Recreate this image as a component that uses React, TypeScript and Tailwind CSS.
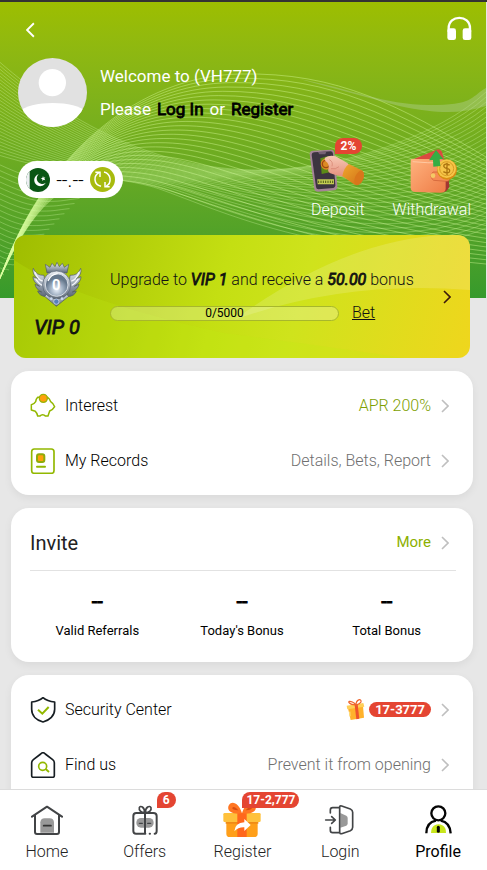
import type { ReactNode } from 'react';

/* ---------- header wave mesh ---------- */

function blend(a: number[], b: number[], count: number): string[] {
  return Array.from({ length: count }, (_, i) => {
    const t = i / (count - 1);
    const p = a.map((v, k) => (v + (b[k] - v) * t).toFixed(1));
    return `M${p[0]},${p[1]} C${p[2]},${p[3]} ${p[4]},${p[5]} ${p[6]},${p[7]} S${p[8]},${p[9]} ${p[10]},${p[11]}`;
  });
}

const crest = blend(
  [8, 256, 50, 150, 140, 74, 240, 72, 400, 104, 487, 155],
  [-10, 300, 40, 176, 80, 172, 135, 180, 290, 244, 487, 262],
  26,
);
const bowl = blend(
  [-5, 56, 90, 140, 180, 168, 260, 168, 440, 134, 487, 90],
  [-5, 152, 60, 172, 110, 174, 150, 184, 360, 282, 487, 226],
  28,
);
const fan = blend(
  [-2, 162, 20, 172, 40, 180, 60, 180, 80, 178, 100, 176],
  [-2, 270, 0, 272, 0, 272, 2, 272, 3, 273, 4, 273],
  20,
);

function Waves() {
  return (
    <svg className="absolute inset-0 h-full w-full" viewBox="0 0 487 296" preserveAspectRatio="none" fill="none" aria-hidden="true">
      <g stroke="#dcffa0" strokeOpacity=".52" strokeWidth=".8">
        {crest.map((d) => (
          <path key={d} d={d} />
        ))}
      </g>
      <g stroke="#dcffb0" strokeOpacity=".38" strokeWidth=".8">
        {bowl.map((d) => (
          <path key={d} d={d} />
        ))}
        {fan.map((d) => (
          <path key={d} d={d} />
        ))}
      </g>
      <path d="M300,77 C350,86 385,103 430,103 S470,96 487,86 L487,104 C460,112 440,112 400,104 Z" fill="#b0cf8c" fillOpacity=".45" />
    </svg>
  );
}

/* ---------- icons ---------- */

function Chevron({ className }: { className: string }) {
  return (
    <svg className={className} viewBox="0 0 8 14" fill="none" stroke="currentColor" strokeWidth="1.6" aria-hidden="true">
      <path d="M1 1l6 6-6 6" />
    </svg>
  );
}

function Headphones() {
  return (
    <svg width="25" height="24" viewBox="629 48 75 72" aria-hidden="true">
      <path d="M634 95v-10c0-42 64-42 64 0v10" fill="none" stroke="#fff" strokeWidth="7" />
      <rect x="630" y="85" width="26" height="35" rx="7" fill="#fff" />
      <rect x="676" y="85" width="26" height="35" rx="7" fill="#fff" />
    </svg>
  );
}

function Avatar() {
  return (
    <svg className="size-[69px] shrink-0 rounded-full" viewBox="0 0 207 207" role="img" aria-label="Avatar">
      <rect width="207" height="207" fill="#e1e1e1" />
      <circle cx="103" cy="74" r="41" fill="#fff" />
      <path d="M0 165C20 143 60 135 104 135s84 8 103 30v42H0z" fill="#fff" />
    </svg>
  );
}

function Flag() {
  return (
    <svg width="24" height="24" viewBox="0 0 72 72" aria-hidden="true">
      <defs>
        <clipPath id="flag-round">
          <circle cx="36" cy="36" r="36" />
        </clipPath>
      </defs>
      <g clipPath="url(#flag-round)">
        <rect width="72" height="72" fill="#0a5614" />
        <rect width="11" height="72" fill="#eef0f4" />
      </g>
      <path d="M38 19a18 18 0 1 0 21 25a15 15 0 1 1-21-25z" fill="#fff" />
      <path d="M51 24l2 5 5-1-3 4 3 5-5-2-4 4v-5l-5-3 5-1z" fill="#fff" />
    </svg>
  );
}

function Refresh() {
  return (
    <svg width="25" height="25" viewBox="0 0 75 75" aria-hidden="true">
      <circle cx="37.500" cy="37.500" r="37.500" fill="#a8bb0e" />
      <g fill="none" stroke="#fff" strokeWidth="4.500">
        <path d="M33 58C10 52 10 26 27 17" />
        <path d="M42 15c23 6 23 34 7 42" />
        <path d="M16 16h14v14" />
        <path d="M59 59H45V45" />
      </g>
    </svg>
  );
}

function DepositIcon() {
  return (
    <svg width="57" height="48" viewBox="58 48 171 144" aria-hidden="true">
      <defs>
        <linearGradient id="dep-cuff" x1="0" y1="0" x2="1" y2="1">
          <stop offset="0" stopColor="#f0a82e" />
          <stop offset="1" stopColor="#cf6f16" />
        </linearGradient>
        <linearGradient id="dep-hand" x1="0" y1="0" x2="0" y2="1">
          <stop offset="0" stopColor="#f7c9b5" />
          <stop offset="1" stopColor="#e58f7c" />
        </linearGradient>
      </defs>
      <path d="M70 59l54-3q9 0 10 9l9 101q0 11-9 12l-49 4q-10 0-11-9L60 69q0-9 10-10z" fill="#a58496" />
      <path d="M73 64l50-3q6 0 7 7l7 95q0 7-6 8l-45 4q-6 0-7-7L66 72q0-7 7-8z" fill="#3c3440" />
      <path d="M85 63l25-1-3 8H89z" fill="#766274" />
      <path d="M92 82l24-7 8 48-28 6z" fill="#5c8a16" />
      <circle cx="110" cy="99" r="17" fill="#dc8a24" />
      <circle cx="109" cy="99" r="11" fill="none" stroke="#9f4a10" strokeWidth="4" />
      <path d="M83 145h50v15H84z" fill="#c5ce52" />
      <path d="M87 149v7M94 149v7M101 149v7M108 149v7M115 149v7M122 149v7M129 149v7" stroke="#4d5a17" strokeWidth="3" />
      <path d="M106 80q14-9 32-4l35 20 8 8-18 34q-24-4-41-11-10-6-5-15 2-14-9-21-5-6-2-11z" fill="url(#dep-hand)" />
      <path d="M119 86q12 6 8 20M124 113q14 3 24-6" fill="none" stroke="#d17f6c" strokeWidth="2" />
      <path d="M178 99q-15 10-20 36 4 4 37 26 22 4 28-24 2-12-4-18z" fill="url(#dep-cuff)" />
      <ellipse cx="208" cy="141" rx="12" ry="23" fill="#d9761b" transform="rotate(22 208 141)" />
    </svg>
  );
}

function WithdrawIcon() {
  return (
    <svg width="48" height="48" viewBox="363 48 144 144" aria-hidden="true">
      <defs>
        <linearGradient id="wallet" x1="0" y1="0" x2="1" y2="1">
          <stop offset="0" stopColor="#ffb27e" />
          <stop offset="1" stopColor="#ee7c46" />
        </linearGradient>
      </defs>
      <path d="M373 85l70-29q14-3 17 10l8 32z" fill="#dc4a40" />
      <path d="M460 95l14 5 7 66q-3 14-18 18z" fill="#a43632" />
      <path d="M368 84h88q14 2 14 18v71q-1 12-15 12l-76-2q-14-1-14-13V90q0-6 3-6z" fill="url(#wallet)" />
      <path d="M371 92q45 5 93 3" stroke="#ffc9a2" strokeWidth="3" fill="none" />
      <path d="M432 123h43q7 1 7 8v14q-1 6-8 6l-40-3q-15-10-2-25z" fill="#f58b54" stroke="#c85a34" strokeWidth="2" />
      <circle cx="432" cy="134" r="7" fill="#f5c965" />
      <circle cx="474" cy="116" r="30" fill="#d98c12" />
      <circle cx="473" cy="113" r="28" fill="#f6c548" />
      <circle cx="473" cy="113" r="21" fill="none" stroke="#d99a24" strokeWidth="3" />
      <path d="M482 102q-17-6-18 3 1 6 11 8t6 10q-6 6-18-1M474 95v37" fill="none" stroke="#ad7410" strokeWidth="4" />
      <path d="M441 57l22 27-11 1 2 20-21 2-1-20-12 1z" fill="#35ad43" />
    </svg>
  );
}

function Emblem() {
  return (
    <svg width="50" height="46" viewBox="94 102 150 138" aria-hidden="true">
      <defs>
        <linearGradient id="silver" x1="0" y1="0" x2="0" y2="1">
          <stop offset="0" stopColor="#f0f2f6" />
          <stop offset=".5" stopColor="#a3adba" />
          <stop offset="1" stopColor="#5c6876" />
        </linearGradient>
        <radialGradient id="orb" cx=".5" cy=".7">
          <stop offset="0" stopColor="#eaf2fb" />
          <stop offset=".6" stopColor="#9aaabd" />
          <stop offset="1" stopColor="#66788c" />
        </radialGradient>
      </defs>
      <g fill="url(#silver)" stroke="#4b5763" strokeWidth="2">
        <path d="M98 124q8 22 32 21l8 64q-22-1-27-17l12 3q-17-8-20-23l14 6q-20-13-20-29l15 7q-19-14-14-32z" />
        <path d="M240 124q-8 22-32 21l-8 64q22-1 27-17l-12 3q17-8 20-23l-14 6q20-13 20-29l-15 7q19-14 14-32z" />
        <path d="M139 138l-5-26 14 9 6-12 9 10 6-13 7 13 9-10 6 12 13-9-5 26z" />
        <path d="M132 208l35 30 37-30-16-15h-41z" />
      </g>
      <path d="M103 136q9 24 23 26M105 155q8 15 20 20M235 136q-9 24-23 26M233 155q-8 15-20 20" stroke="#f5f7fa" strokeWidth="4" fill="none" />
      <circle cx="168" cy="174" r="42" fill="url(#silver)" stroke="#536071" strokeWidth="2" />
      <circle cx="168" cy="174" r="34" fill="url(#orb)" stroke="#d6dce4" strokeWidth="3" />
      <path d="M142 162q8-20 29-22" stroke="#fff" strokeWidth="4" fill="none" />
      <circle cx="167" cy="224" r="8" fill="#587fba" stroke="#dce6f2" strokeWidth="2" />
      <circle cx="152" cy="215" r="4" fill="#cbd9ee" />
      <circle cx="184" cy="215" r="4" fill="#cbd9ee" />
      <text x="167" y="190" textAnchor="middle" fontSize="44" fontWeight="700" fill="#fff" fontFamily="Roboto, sans-serif">0</text>
    </svg>
  );
}

function PiggyIcon() {
  return (
    <svg width="26" height="26" viewBox="89 84 78 78" aria-hidden="true">
      <path d="M112 97h30q6 4 9 13 8 5 12 15-5 9-15 13l-5 15h-8q-3-4-8-4t-8 4h-7q-2-10-7-14l-12-4v-16q9-2 13-9 1-8 6-13z" fill="#fff" stroke="#92b800" strokeWidth="4.500" strokeLinejoin="round" />
      <circle cx="129" cy="100" r="12" fill="#ff9f0c" stroke="#9cb307" strokeWidth="4" />
    </svg>
  );
}

function RecordsIcon() {
  return (
    <svg width="26" height="26" viewBox="89 247 78 78" aria-hidden="true">
      <rect x="94" y="250" width="67" height="73" rx="8" fill="#fff" stroke="#92b800" strokeWidth="5" />
      <rect x="110" y="266" width="22" height="23" rx="6" fill="#ff9f0c" stroke="#8eab0a" strokeWidth="6" />
      <path d="M110 303h24" stroke="#92b800" strokeWidth="6" strokeLinecap="round" />
    </svg>
  );
}

function ShieldIcon() {
  return (
    <svg width="26" height="26" viewBox="90 78 78 78" fill="none" aria-hidden="true">
      <path d="M129 80c10 9 22 12 35 13v22c0 19-15 33-35 38-20-5-34-19-34-38V93c12-1 24-4 34-13z" stroke="#161d22" strokeWidth="5" strokeLinejoin="round" />
      <path d="M114 116l13 12 19-20" stroke="#92b800" strokeWidth="6" />
    </svg>
  );
}

function FindIcon() {
  return (
    <svg width="26" height="26" viewBox="90 243 78 78" fill="none" aria-hidden="true">
      <path d="M129 245q3 0 7 4l22 17q5 4 5 9v39q0 5-6 5h-56q-6 0-6-5v-39q0-5 5-9l22-17q4-4 7-4z" stroke="#161d22" strokeWidth="5" />
      <circle cx="128" cy="286" r="12" stroke="#92b800" strokeWidth="5" />
      <path d="M137 294l10 9" stroke="#92b800" strokeWidth="5.500" />
    </svg>
  );
}

function SmallGift() {
  return (
    <svg width="20" height="22" viewBox="331 86 60 66" aria-hidden="true">
      <path d="M337 114l45-7 3 35-40 7z" fill="#ffb22c" />
      <path d="M333 106l50-8 3 11-51 8z" fill="#ffcf57" />
      <path d="M357 104l9-2 5 43-9 2z" fill="#ee532c" />
      <path d="M360 104c-25-2-26-16-10-9q7 3 11 9c0-17 17-21 15-9q-3 6-15 9z" fill="none" stroke="#ee642c" strokeWidth="3.500" />
      <path d="M342 124l1 14" stroke="#ffdc79" strokeWidth="4" />
    </svg>
  );
}

function HomeIcon() {
  return (
    <svg width="32" height="32" viewBox="91 400 96 96" fill="none" aria-hidden="true">
      <path d="M119 486v-31q1-12 13-12h15q12 0 13 12v31z" fill="#999" />
      <path d="M94 438l45-30 45 30M103 433v51q0 6 6 6h60q6 0 6-6v-51" stroke="#424446" strokeWidth="6" strokeLinecap="round" strokeLinejoin="round" />
      <path d="M129 465h22" stroke="#333" strokeWidth="5" strokeLinecap="round" />
    </svg>
  );
}

function OffersIcon() {
  return (
    <svg width="32" height="32" viewBox="386 401 96 96" fill="none" aria-hidden="true">
      <rect x="408" y="443" width="52" height="29" rx="14" fill="#999" />
      <g stroke="#424446" strokeWidth="6" strokeLinecap="round" strokeLinejoin="round">
        <path d="M435 490h-28q-8 0-8-8v-45q0-9 9-9h51q10 0 10 9v45q0 8-6 8M434 428v61M448 490h1" />
        <path d="M433 427c-11 0-18-8-16-15 3-8 16-2 16 15zM435 427c0-17 13-23 17-15 2 7-5 15-17 15z" strokeWidth="5" />
        <path d="M417 459h9M442 459h9" strokeWidth="4" />
      </g>
    </svg>
  );
}

function RegisterIcon() {
  return (
    <svg width="38" height="36" viewBox="671 403 114 108" aria-hidden="true">
      <path d="M681 455h94v43q0 10-11 10h-73q-10 0-10-10z" fill="#ff9f19" />
      <rect x="672" y="436" width="112" height="27" rx="4" fill="#ffc13b" />
      <path d="M679 463h98v5h-98z" fill="#ef8b16" />
      <path d="M714 436h28v72h-28z" fill="#ff671c" />
      <path d="M728 437c-36 5-47-12-39-25 10-15 31-3 39 25zM728 437c36 5 47-12 39-25-10-15-31-3-39 25z" fill="#ff7622" />
      <path d="M717 428q-12-13-17-9-6 8 17 9zM739 428q12-13 17-9 6 8-17 9z" fill="#d94e11" />
      <path d="M705 491q2-26 30-27v-10l19 18-19 18v-11q-18-1-30 12z" fill="#fff" />
    </svg>
  );
}

function LoginIcon() {
  return (
    <svg width="32" height="32" viewBox="262 400 96 96" fill="none" aria-hidden="true">
      <path d="M311 427l18 8q4 2 4 7v16q0 5-4 7l-18 6z" fill="#999" />
      <g stroke="#424446" strokeWidth="5" strokeLinecap="round" strokeLinejoin="round">
        <path d="M309 408q0-3 6-2l26 9q7 3 7 10v45q0 7-7 10l-26 9q-6 1-6-4zM307 411h-19q-7 0-7 7v9M307 486h-19q-7 0-7-7v-9M267 448h28M285 438l11 10-11 10" />
      </g>
    </svg>
  );
}

function ProfileIcon() {
  return (
    <svg width="32" height="32" viewBox="553 401 96 96" fill="none" aria-hidden="true">
      <circle cx="602" cy="429" r="21" stroke="#050505" strokeWidth="7" />
      <path d="M580 488q0-16 11-23 12-6 23 0 12 7 11 23z" fill="#c8e61c" />
      <path d="M566 489q0-33 29-38M609 451q28 5 30 38" stroke="#050505" strokeWidth="7" />
      <path d="M602 471v12" stroke="#050505" strokeWidth="9" strokeLinecap="round" />
    </svg>
  );
}

/* ---------- pieces ---------- */

const cardClass = 'mr-[13px] ml-[11px] rounded-[18px] bg-white pt-[7px] shadow-[0_3px_8px_rgba(0,0,0,0.06)]';

const heavy = '[-webkit-text-stroke:0.8px_currentColor]';

type RowProps = { icon: ReactNode; label: string; value: ReactNode; tone?: string };

function Row({ icon, label, value, tone = 'text-[#6f6f6f]' }: RowProps) {
  return (
    <button type="button" className="flex h-[55px] w-full items-center pr-6 pl-[19px] text-left text-base font-light">
      {icon}
      <span className="ml-[9px] text-black">{label}</span>
      <span className={`ml-auto flex items-center ${tone}`}>{value}</span>
      <Chevron className="ml-[10px] h-[14px] w-2 text-[#bfbfbf]" />
    </button>
  );
}

type TabProps = { icon: ReactNode; label: string; badge?: ReactNode; active?: boolean };

function Tab({ icon, label, badge, active }: TabProps) {
  return (
    <a
      href={`#${label.toLowerCase()}`}
      aria-current={active ? 'page' : undefined}
      className={`relative flex flex-1 flex-col items-center text-base ${active ? 'text-black' : 'font-light text-[#222]'}`}
    >
      <span className="mt-3 flex h-9 items-center">{icon}</span>
      <span className="mt-1 leading-5">{label}</span>
      {badge}
    </a>
  );
}

const badgeClass =
  'absolute top-[2px] left-1/2 flex h-4 items-center rounded-full rounded-bl-none bg-[#e44532] text-xs font-bold whitespace-nowrap text-white';

const stats = ['Valid Referrals', "Today's Bonus", 'Total Bonus'];

export default function App() {
  return (
    <div className="flex h-dvh flex-col overflow-hidden border-t-2 border-[#333] bg-[#e7e7e7] font-['Roboto',sans-serif]">
      <main className="relative min-h-0 flex-1 overflow-y-auto pr-px [scrollbar-width:none]">
        <div className="absolute inset-x-0 top-0 mr-px h-[296px] overflow-hidden bg-linear-to-b from-[#9dbe00] to-[#369a2c]" aria-hidden="true">
          <Waves />
        </div>

        <header className="relative text-white">
          <div className="flex h-14 items-center justify-between pr-[14px] pl-[26px]">
            <button type="button" aria-label="Back">
              <Chevron className="h-4 w-[9px] rotate-180" />
            </button>
            <button type="button" aria-label="Support" className="pb-1">
              <Headphones />
            </button>
          </div>
          <div className="flex items-center gap-[13px] pl-[18px] text-[17px] leading-[33px]">
            <Avatar />
            <div>
              <p>Welcome to (VH777)</p>
              <p className="flex gap-[6px]">
                Please
                <a href="#login" className={`text-black ${heavy}`}>Log In</a>
                or
                <a href="#register" className={`text-black ${heavy}`}>Register</a>
              </p>
            </div>
          </div>
          <div className="flex items-start justify-between pt-2 pr-[15px] pl-[18px]">
            <div className="mt-[26px] flex h-[37px] w-[105px] items-center justify-between rounded-full bg-white px-2 text-xl font-light text-black">
              <Flag />
              <span>--.--</span>
              <button type="button" aria-label="Refresh balance">
                <Refresh />
              </button>
            </div>
            <div className="flex gap-[26px] [text-shadow:0_0_1px_rgba(255,255,255,0.8)]">
              <button type="button" className="relative flex flex-col items-center pt-3 font-light">
                <DepositIcon />
                <span className="mt-[3px] leading-6">Deposit</span>
                <span className="absolute top-[3px] right-1 rounded-full rounded-bl-none bg-[#e44532] px-[6px] text-xs leading-4 font-bold">2%</span>
              </button>
              <button type="button" className="flex flex-col items-center pt-3 font-light">
                <span className="pl-1">
                  <WithdrawIcon />
                </span>
                <span className="mt-[3px] leading-6">Withdrawal</span>
              </button>
            </div>
          </div>
        </header>

        <section className="relative mt-[13px] mr-4 ml-[14px] flex h-[123px] items-center overflow-hidden rounded-xl bg-linear-[105deg,#9fbd00_0%,#c4df12_45%,#cfe31c_62%,#efd61d_100%] text-[#111]">
          <svg className="absolute inset-0 h-full w-full" viewBox="0 0 456 123" preserveAspectRatio="none" aria-hidden="true">
            <path d="M0 25Q60 65 210 98 340 115 390 123H0z" fill="#c0ee10" fillOpacity=".22" />
            <path d="M456 0H430Q330 5 220 85 330 45 456 55z" fill="#fff" fillOpacity=".15" />
          </svg>
          <div className="relative flex w-[86px] flex-col items-center pt-[6px]">
            <Emblem />
            <strong className={`mt-2 text-xl leading-6 font-normal italic ${heavy}`}>VIP 0</strong>
          </div>
          <div className="relative flex-1 pl-[10px]">
            <p className="text-base leading-6 font-light">
              Upgrade to <b className={`font-normal italic ${heavy}`}>VIP 1</b> and receive a{' '}
              <b className={`font-normal italic ${heavy}`}>50.00</b> bonus
            </p>
            <div className="mt-[9px] flex items-center">
              <div className="flex h-[15px] w-[229px] items-center justify-center rounded-full border border-[#a7b72c] bg-white/25 text-xs text-black">0/5000</div>
              <a href="#bet" className="ml-[13px] text-base leading-6 font-light underline">Bet</a>
            </div>
          </div>
          <Chevron className="relative mr-[19px] h-[14px] w-2 text-[#3c1a0b]" />
        </section>

        <section className={`mt-[13px] pb-[7px] ${cardClass}`}>
          <Row icon={<PiggyIcon />} label="Interest" value="APR 200%" tone="text-[#7da000]" />
          <Row icon={<RecordsIcon />} label="My Records" value="Details, Bets, Report" />
        </section>

        <section className={`mt-[13px] pb-[7px] ${cardClass}`}>
          <div className="mr-[17px] ml-[19px] flex h-14 items-center border-b border-[#e2e2e2] pr-[7px]">
            <h2 className="text-xl text-[#222]">Invite</h2>
            <a href="#invite" className="ml-auto flex items-center text-[15px] text-[#8cb000]">
              More
              <Chevron className="ml-[10px] h-[14px] w-2 text-[#bfbfbf]" />
            </a>
          </div>
          <dl className="mx-[14px] grid grid-cols-3 pt-[18px] pb-[14px] text-center text-black">
            {stats.map((name) => (
              <div key={name} className="flex flex-col-reverse">
                <dt className="mt-2 text-[13px] leading-5">{name}</dt>
                <dd className={`text-xl leading-6 ${heavy}`}>--</dd>
              </div>
            ))}
          </dl>
        </section>

        <section className={`mt-[13px] pb-10 ${cardClass}`}>
          <Row
            icon={<ShieldIcon />}
            label="Security Center"
            value={
              <>
                <SmallGift />
                <span className="ml-[3px] rounded-full bg-[#e44532] px-[6px] text-[13px] leading-[15px] font-bold text-white">17-3777</span>
              </>
            }
          />
          <Row icon={<FindIcon />} label="Find us" value="Prevent it from opening" />
        </section>
      </main>

      <nav className="-ml-[2px] flex h-[81px] shrink-0 border-t border-[#dcdcdc] bg-white" aria-label="Main">
        <Tab icon={<HomeIcon />} label="Home" />
        <Tab icon={<OffersIcon />} label="Offers" badge={<span className={`ml-3 px-[6px] ${badgeClass}`}>6</span>} />
        <Tab icon={<RegisterIcon />} label="Register" badge={<span className={`px-1 ${badgeClass}`}>17-2,777</span>} />
        <Tab icon={<LoginIcon />} label="Login" />
        <Tab icon={<ProfileIcon />} label="Profile" active />
      </nav>
    </div>
  );
}
